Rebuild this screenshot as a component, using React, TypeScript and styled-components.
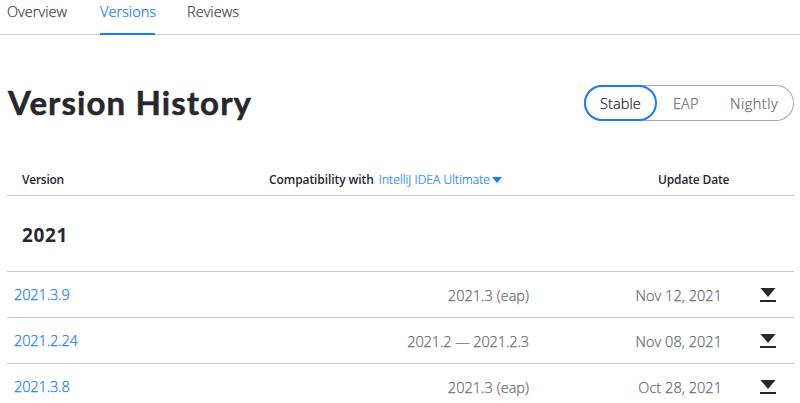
import React from "react";
import styled, { createGlobalStyle } from "styled-components";

const GlobalStyle = createGlobalStyle`
  * { box-sizing: border-box; }
  body {
    margin: 0;
    background: #fff;
    color: #27282c;
    font-family: "Open Sans", "Noto Sans", sans-serif;
    overflow: hidden;
  }
`;

const Page = styled.div`
  width: 800px;
  height: 403px;
  overflow: hidden;
`;

const Tabs = styled.nav`
  display: flex;
  gap: 32px;
  height: 35px;
  padding-left: 7px;
  border-bottom: 1px solid #d1d1d2;
`;

const Tab = styled.a<{ $active?: boolean; $width: number }>`
  width: ${(p) => p.$width}px;
  height: 35px;
  line-height: 24px;
  font-size: 14.5px;
  font-weight: 300;
  -webkit-text-stroke: 0.25px currentColor;
  letter-spacing: 0.03px;
  white-space: nowrap;
  color: ${(p) => (p.$active ? "#167dff" : "#45464b")};
  border-bottom: ${(p) => (p.$active ? "2px solid #167dff" : "none")};
`;

const Heading = styled.header`
  display: flex;
  justify-content: space-between;
  height: 36px;
  margin: 50px 6px 0 7px;
`;

const Title = styled.h1`
  margin: 0 0 0 1px;
  font-family: Lato, sans-serif;
  font-size: 33px;
  line-height: 34px;
  font-weight: 700;
  -webkit-text-stroke: 0.5px currentColor;
  letter-spacing: 1.1px;
  white-space: nowrap;
`;

const Switcher = styled.div`
  display: flex;
  width: 210px;
  height: 36px;
  border-radius: 18px;
  box-shadow: inset 0 0 0 1px #a9a9ab;
`;

const Channel = styled.button<{ $active?: boolean; $width: number; $spacing?: number }>`
  width: ${(p) => p.$width}px;
  height: 36px;
  padding: 1px 0 0 16px;
  text-align: left;
  border: 0;
  border-radius: 18px;
  background: transparent;
  box-shadow: ${(p) => (p.$active ? "inset 0 0 0 2px #167dff" : "none")};
  color: ${(p) => (p.$active ? "#27282c" : "#6b6c70")};
  font: 300 14.5px/35px "Open Sans", sans-serif;
  -webkit-text-stroke: 0.25px currentColor;
  letter-spacing: ${(p) => p.$spacing ?? 0.1}px;
  white-space: nowrap;
`;

const Table = styled.section`
  margin: 43px 6px 0 7px;
`;

const HeadRow = styled.div`
  display: grid;
  grid-template-columns: 262px 389px 1fr;
  height: 32px;
  line-height: 32px;
  border-bottom: 1px solid #c9c9ca;
  font-size: 12px;
  font-weight: 600;
  white-space: nowrap;
`;

const HeadCell = styled.div<{ $indent?: number; $spacing?: number }>`
  display: flex;
  padding-left: ${(p) => p.$indent ?? 0}px;
  letter-spacing: ${(p) => p.$spacing ?? -0.08}px;
`;

const Product = styled.a`
  display: flex;
  align-items: center;
  gap: 2px;
  margin-left: 5px;
  color: #167dff;
  font-size: 12px;
  font-weight: 300;
  -webkit-text-stroke: 0.2px currentColor;
  letter-spacing: 0.1px;
`;

const Year = styled.h2`
  margin: 0;
  height: 76px;
  padding-left: 15px;
  border-bottom: 1px solid #c9c9ca;
  font-size: 19px;
  line-height: 78px;
  font-weight: 700;
  letter-spacing: 0.6px;
`;

const Row = styled.div`
  display: grid;
  grid-template-columns: 262px 260px 193px 1fr;
  height: 46px;
  border-bottom: 1px solid #c9c9ca;
  font-size: 14.5px;
  font-weight: 300;
  -webkit-text-stroke: 0.25px currentColor;
  line-height: 48px;
  white-space: nowrap;
  color: #6b6c70;
`;

const VersionLink = styled.a`
  padding-left: 7px;
  line-height: 46px;
  letter-spacing: -0.12px;
  color: #167dff;
`;

const Value = styled.div<{ $spacing?: number }>`
  text-align: right;
  letter-spacing: ${(p) => p.$spacing ?? 0}px;
`;

const Download = styled.a`
  display: flex;
  padding: 16px 0 0 38px;
`;

const releases = [
  { version: "2021.3.9", range: "2021.3 (eap)", date: "Nov 12, 2021" },
  { version: "2021.2.24", range: "2021.2 — 2021.2.3", date: "Nov 08, 2021" },
  { version: "2021.3.8", range: "2021.3 (eap)", date: "Oct 28, 2021" },
];

const Caret = () => (
  <svg width="10" height="6" viewBox="0 0 10 6" fill="#167dff">
    <path d="M0 0h10L5 6z" />
  </svg>
);

const DownloadIcon = () => (
  <svg width="16" height="14" viewBox="0 0 16 14" fill="#27282c">
    <path d="M.5 0h15L8 9z" />
    <path d="M0 12h16v2H0z" />
  </svg>
);

export default function App() {
  return (
    <Page>
      <GlobalStyle />
      <Tabs>
        <Tab $width={61}>Overview</Tab>
        <Tab $width={55} $active>Versions</Tab>
        <Tab $width={52}>Reviews</Tab>
      </Tabs>
      <Heading>
        <Title>Version History</Title>
        <Switcher>
          <Channel $width={73} $active>Stable</Channel>
          <Channel $width={57}>EAP</Channel>
          <Channel $width={80} $spacing={0.5}>Nightly</Channel>
        </Switcher>
      </Heading>
      <Table>
        <HeadRow>
          <HeadCell $indent={15} $spacing={-0.25}>Version</HeadCell>
          <HeadCell>
            Compatibility with
            <Product>
              IntelliJ IDEA Ultimate
              <Caret />
            </Product>
          </HeadCell>
          <HeadCell $spacing={-0.15}>Update Date</HeadCell>
        </HeadRow>
        <Year>2021</Year>
        {releases.map((r) => (
          <Row key={r.version}>
            <VersionLink>{r.version}</VersionLink>
            <Value $spacing={r.range.includes("—") ? -0.1 : 0.03}>{r.range}</Value>
            <Value $spacing={0.05}>{r.date}</Value>
            <Download aria-label={`Download ${r.version}`}>
              <DownloadIcon />
            </Download>
          </Row>
        ))}
      </Table>
    </Page>
  );
}
